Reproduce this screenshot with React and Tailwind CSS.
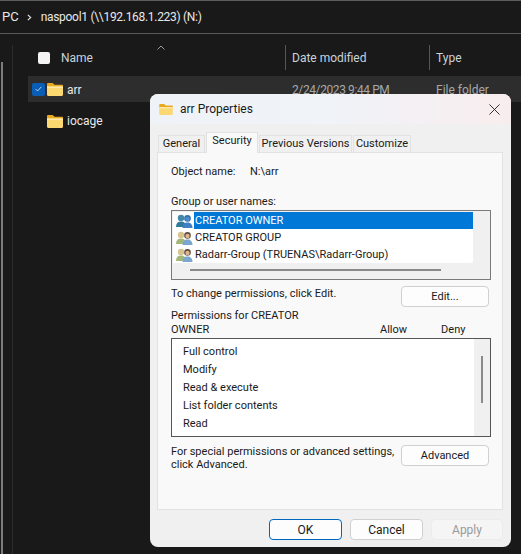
const FONT = "font-['Roboto','Lato',sans-serif]";

function Folder({ className }) {
  return (
    <svg viewBox="0 0 16 13" className={className}>
      <path d="M0 1.2C0 .5.5 0 1.2 0h4c.4 0 .7.1 1 .4L7.6 1.8H15c.6 0 1 .4 1 1V5H0z" fill="#e8a820" />
      <path d="M0 3.6h15c.6 0 1 .4 1 1v7.2c0 .7-.5 1.2-1.2 1.2H1.2C.5 13 0 12.5 0 11.8z" fill="#fcd872" />
      <path d="M0 3.6h15c.6 0 1 .4 1 1v.4H0z" fill="#ffe9a6" />
    </svg>
  );
}

function Users({ blue }) {
  const a = blue ? "#2f7a9c" : "#a3b878";
  const ah = blue ? "#3f8aa8" : "#d8c48e";
  const b = blue ? "#3f7fc4" : "#7aa6d0";
  const bh = blue ? "#2f6ea8" : "#5d4c3e";
  return (
    <svg viewBox="0 0 17 14" className="w-[17px] h-[14px] shrink-0">
      <circle cx="5" cy="4" r="3.2" fill={ah} />
      <path d="M0 13c0-3.6 2-5.4 5-5.4S10 9.4 10 13z" fill={a} />
      <circle cx="11.5" cy="4.4" r="3.3" fill={bh} />
      <circle cx="11.5" cy="5" r="2.2" fill={blue ? "#4d8ed0" : "#e2b48c"} />
      <path d="M6.5 14c0-3.6 2-5.6 5-5.6s5 2 5 5.6z" fill={b} />
    </svg>
  );
}

function Btn({ children, className = "", disabled, primary }) {
  return (
    <div
      className={`flex items-center justify-center rounded-[4px] border pt-px ${
        primary
          ? "border-[#0067c0] bg-[#fdfdfd] text-[#1a1a1a]"
          : disabled
          ? "border-[#ececec] bg-[#f5f5f5] text-[#9a9a9a]"
          : "border-[#d0d0d0] bg-[#fdfdfd] text-[#1a1a1a]"
      } ${className}`}
    >
      {children}
    </div>
  );
}

function Tab({ children, active, className = "" }) {
  return (
    <div
      className={`flex items-center justify-center whitespace-nowrap border border-[#e2e2e2] border-b-0 text-[#1a1a1a] ${
        active ? "h-[21px] bg-[#f9f9f9] pb-[3px] relative z-10 -mb-px" : "h-[17px] bg-[#f0f0f0]"
      } ${className}`}
    >
      {children}
    </div>
  );
}

function UserRow({ blue, selected, children }) {
  return (
    <div className="flex items-center h-[17px] pl-[3px]">
      <Users blue={blue} />
      <div
        className={`flex-1 h-[17px] flex items-center pl-px ml-px pt-px ${
          selected ? "bg-[#0078d7] text-white" : "text-[#1a1a1a]"
        }`}
      >
        {children}
      </div>
    </div>
  );
}

function Dialog() {
  return (
    <div className={`absolute left-[150px] top-[94px] w-[361px] h-[453px] rounded-[8px] bg-[#f0f0f0] overflow-hidden flex flex-col text-[11px] text-[#1a1a1a] ${FONT}`}>
      <div className="h-[30px] mb-px shrink-0 flex items-center pl-[9px] pr-[7px] bg-gradient-to-r from-[#eff3f8] via-[#f0f3f8] to-[#f8edee]">
        <Folder className="w-[14px] h-[11px] mt-px" />
        <span className="ml-[7px] text-[12px]">arr Properties</span>
        <svg viewBox="0 0 12 12" className="w-[11px] h-[11px] ml-auto mr-[4px] mt-px">
          <path d="M.5.5l11 11M11.5.5l-11 11" stroke="#222" strokeWidth="1" fill="none" />
        </svg>
      </div>
      <div className="flex items-end gap-px h-[21px] mt-[6px] ml-[8px] shrink-0">
        <Tab className="w-[47px]">General</Tab>
        <Tab active className="w-[52px]">Security</Tab>
        <Tab className="w-[93px]">Previous Versions</Tab>
        <Tab className="w-[58px]">Customize</Tab>
      </div>
      <div className="ml-[7px] w-[346px] h-[358px] shrink-0 bg-[#f9f9f9] border border-[#e2e2e2] pl-[13px] pr-[11px] flex flex-col">
        <div className="flex h-[16px] mt-[11px] items-center">
          <span className="w-[79px]">Object name:</span>
          <span>N:\arr</span>
        </div>
        <div className="h-[16px] mt-[14px] flex items-center">Group or user names:</div>
        <div className="h-[70px] border border-[#7a7a7a] bg-[#f0f0f0] p-px relative shrink-0">
          <div className="w-[300px] h-[51px] bg-white rounded-br-[2px] overflow-hidden">
            <UserRow blue selected>CREATOR OWNER</UserRow>
            <UserRow>CREATOR GROUP</UserRow>
            <UserRow>Radarr-Group (TRUENAS\Radarr-Group)</UserRow>
          </div>
          <div className="absolute left-[18px] top-[58px] w-[251px] h-[2px] bg-[#8a8a8a]" />
        </div>
        <div className="flex mt-[6px] h-[22px] shrink-0">
          <span className="h-[14px] mt-px flex items-center">To change permissions, click Edit.</span>
          <Btn className="ml-auto mr-[2px] w-[88px] h-[21px]">Edit...</Btn>
        </div>
        <div className="flex items-end h-[29px] leading-[14px] shrink-0">
          <span className="w-[150px]">Permissions for CREATOR OWNER</span>
          <span className="ml-[59px]">Allow</span>
          <span className="ml-[34px]">Deny</span>
        </div>
        <div className="mt-px h-[99px] border border-[#555] bg-white flex shrink-0">
          <div className="w-[302px] pl-[11px] pt-[4px] flex flex-col">
            {["Full control", "Modify", "Read & execute", "List folder contents", "Read"].map((t) => (
              <div key={t} className="h-[18px] flex items-center">{t}</div>
            ))}
          </div>
          <div className="flex-1 bg-[#f0f0f0] pl-[7px] pt-[17px]">
            <div className="w-[2px] h-[47px] bg-[#8a8a8a]" />
          </div>
        </div>
        <div className="flex mt-[8px] shrink-0">
          <span className="w-[225px] leading-[13px]">For special permissions or advanced settings, click Advanced.</span>
          <Btn className="ml-auto mr-[2px] w-[88px] h-[21px]">Advanced</Btn>
        </div>
      </div>
      <div className="flex gap-[8px] mt-[9px] ml-[119px] text-[12px]">
        <Btn primary className="w-[73px] h-[21px]">OK</Btn>
        <Btn className="w-[73px] h-[21px]">Cancel</Btn>
        <Btn disabled className="w-[72px] h-[21px]">Apply</Btn>
      </div>
    </div>
  );
}

function Explorer() {
  return (
    <div className={`w-[521px] h-[554px] bg-[#191919] text-[#e8e8e8] text-[12px] overflow-hidden flex flex-col ${FONT}`}>
      <div className="h-[34px] shrink-0 border-t border-t-[#5c5c5c] border-b border-b-[#5a5a5a] flex items-center pl-[2px]">
        <span className="text-[13px]">PC</span>
        <svg viewBox="0 0 6 8" className="w-[5px] h-[7px] ml-[8px] mr-[9px]">
          <path d="M1 .8L4.5 4 1 7.2" stroke="#e8e8e8" strokeWidth="1.3" fill="none" />
        </svg>
        <span className="tracking-[-0.3px]">naspool1 (\\192.168.1.223) (N:)</span>
      </div>
      <div className="flex flex-1 min-h-0">
        <div className="w-[13px] shrink-0 relative border-r border-r-[#2b2b2b] mt-[11px]">
          <div className="absolute left-px top-[17px] bottom-0 w-[2px] bg-[#7d7d7d]" />
        </div>
        <div className="flex-1 flex flex-col pl-[15px]">
          <div className="h-[25px] mt-[11px] flex items-center shrink-0 relative text-[#c9d3dc]">
            <div className="w-[12px] h-[12px] ml-[10px] rounded-[2px] bg-[#f4f4f4]" />
            <span className="ml-[11px] w-[224px]">Name</span>
            <div className="w-px h-[25px] bg-[#555]" />
            <span className="ml-[6px] w-[137px]">Date modified</span>
            <div className="w-px h-[25px] bg-[#555]" />
            <span className="ml-[6px]">Type</span>
            <svg viewBox="0 0 8 5" className="absolute left-[129px] top-0 w-[8px] h-[5px]">
              <path d="M.5 4.5L4 1l3.5 3.5" stroke="#9a9a9a" strokeWidth="1" fill="none" />
            </svg>
          </div>
          <div className="h-[26px] mt-[6px] flex items-center bg-[#2d2d2d] shrink-0 whitespace-nowrap">
            <div className="w-[13px] h-[13px] ml-[4px] rounded-[2px] bg-[#0a5db5] flex items-center justify-center">
              <svg viewBox="0 0 8 7" className="w-[7px] h-[6px]">
                <path d="M.7 3.6l2.2 2.2L7.3 1" stroke="#cfe4fa" strokeWidth="1" fill="none" />
              </svg>
            </div>
            <Folder className="w-[16px] h-[13px] ml-[2px]" />
            <span className="ml-[4px] w-[225px] pt-px">arr</span>
            <span className="text-[#a8a8a8] w-[144px] pt-px tracking-[-0.4px]">2/24/2023 9:44 PM</span>
            <span className="text-[#a8a8a8] pt-px">File folder</span>
          </div>
          <div className="h-[26px] mt-[6px] flex items-center shrink-0">
            <Folder className="w-[16px] h-[13px] ml-[19px]" />
            <span className="ml-[4px]">iocage</span>
          </div>
        </div>
      </div>
    </div>
  );
}

export default function App() {
  return (
    <div className="relative w-[521px] h-[554px] overflow-hidden">
      <Explorer />
      <Dialog />
    </div>
  );
}
